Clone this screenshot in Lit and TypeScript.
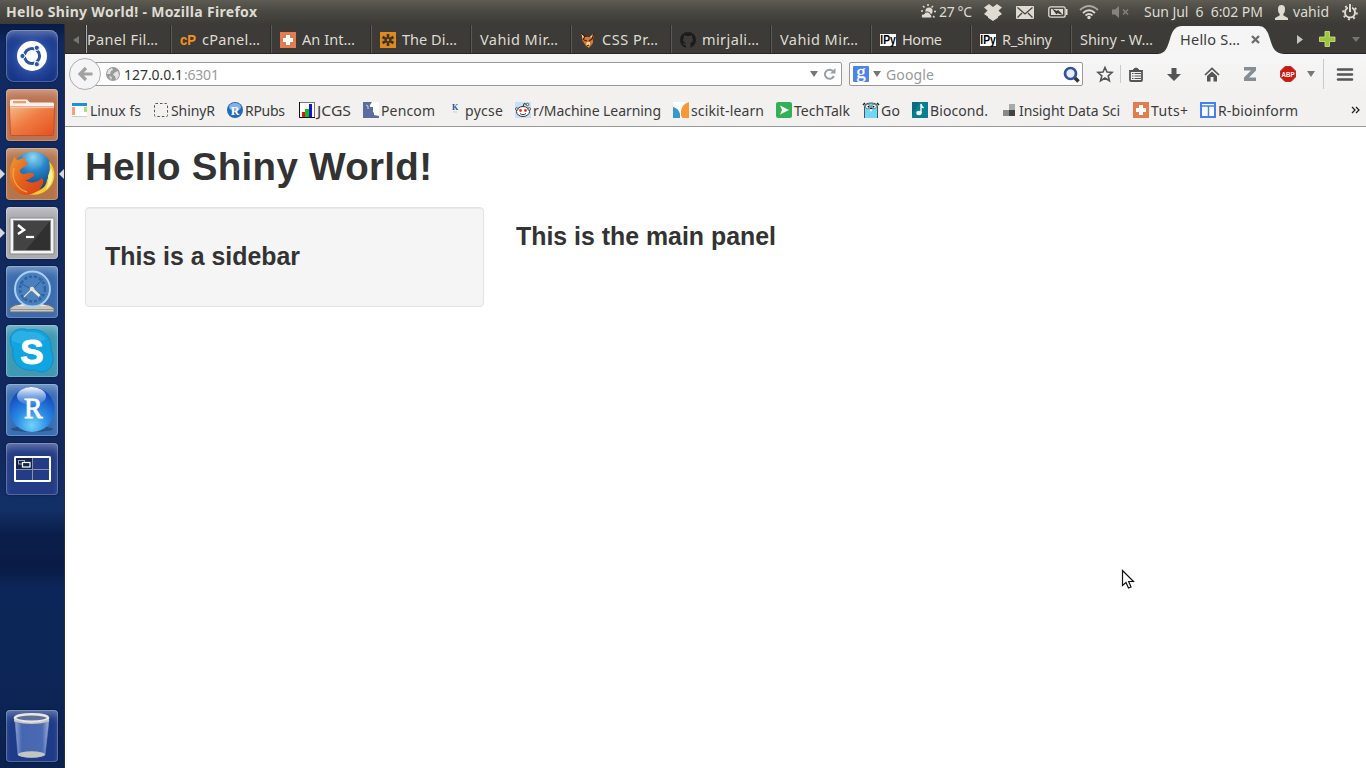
import { LitElement, html, css, svg } from "lit";
import { customElement, property } from "lit/decorators.js";

/** A single line of text that occupies exactly `w` pixels, by tracking or, with `squeeze`, by scaling. */
@customElement("fit-text")
class FitText extends LitElement {
  @property({ type: Number }) w = 0;
  @property() text = "";
  @property({ type: Boolean }) squeeze = false;
  static styles = css`
    :host { display: inline-block; white-space: pre; flex: none; }
    span { display: inline-block; transform-origin: 0 50%; }
  `;
  render() {
    return html`<span>${this.text}</span>`;
  }
  updated() {
    const s = this.shadowRoot!.querySelector("span")!;
    s.style.letterSpacing = "0px";
    s.style.transform = "";
    const natural = s.getBoundingClientRect().width;
    if (this.squeeze) s.style.transform = `scaleX(${this.w / natural})`;
    else s.style.letterSpacing = (this.w - natural) / Math.max(1, this.text.length - 1) + "px";
  }
}

const t = (text: string, w: number, squeeze = false) =>
  html`<fit-text .text=${text} .w=${w} .squeeze=${squeeze}></fit-text>`;
const ic = (w: number, h: number, body: unknown) =>
  html`<svg class="ic" width=${w} height=${h} viewBox="0 0 ${w} ${h}">${body}</svg>`;

const tuts = svg`<rect width="16" height="16" fill="#e27d50"/><path d="M6 3h4v3h3v4h-3v3H6v-3H3V6h3z" fill="#fff"/>`;
const ipy = svg`<rect y="2" width="16" height="12" fill="#fff"/><text x="0.3" y="12" class="ipy" textLength="15.500" lengthAdjust="spacingAndGlyphs">IPy</text>`;

const tabs: { icon?: unknown; label: string; w: number }[] = [
  { icon: svg`<text x="0" y="13" class="cp" textLength="16" lengthAdjust="spacingAndGlyphs">cP</text>`, label: "cPanel…", w: 58 },
  { icon: tuts, label: "An Int…", w: 53 },
  {
    icon: svg`<rect width="16" height="16" fill="#df8a1c"/><g stroke="#3c3326" stroke-width="2.6"><path d="M8 2v12M2.5 5l11 6M13.500 5l-11 6"/></g><circle cx="8" cy="8" r="1.2" fill="#df8a1c"/>`,
    label: "The Di…", w: 55,
  },
  { label: "Vahid Mir…", w: 78 },
  {
    icon: svg`<path d="M2 3l3 2h5l4-3-1 5 0 4-4 5-3-2-4-6z" fill="#d9772b"/><path d="M1 1l4 5-2 1M10 5l4-4-1 5M7 10l3 0 0 3-2 2-2-3z" fill="#f6dba8"/><path d="M1 1l4 3-2 4M14 1l-2 6M4 8l3 1M9 9l3-2M7 14l2-1" stroke="#4b1f0b" fill="none" stroke-width="1.3"/>`,
    label: "CSS Pr…", w: 56,
  },
  {
    icon: svg`<circle cx="8" cy="8" r="8" fill="#1d1c1b"/><path d="M6 16v-3c-2 .5-3-.500-3.500-2 1 .2 1.500 1 2.500 1l1-1C3.500 10.500 3 9 3.200 7L4 5.300 4 3.200l2 .8h4l2-.8v2.100l.8 1.700c.2 2-.3 3.500-2.800 4l.5 1V16z" fill="#3c3b37"/>`,
    label: "mirjali…", w: 57,
  },
  { label: "Vahid Mir…", w: 78 },
  { icon: ipy, label: "Home", w: 40 },
  { icon: ipy, label: "R_shiny", w: 50 },
  { label: "Shiny - W…", w: 73 },
];

const marks: { icon: unknown; label: string; w: number; squeeze?: boolean }[] = [
  { icon: svg`<rect y="1" width="15" height="14" fill="#fff"/><rect y="1" width="15" height="3" fill="#1e90d8"/><rect y="5" width="3" height="8" fill="#f0a27c"/><rect x="12" y="5" width="3" height="5" fill="#b6d98a"/><path d="M0 14.500h15" stroke="#ccc"/>`, label: "Linux fs", w: 51 },
  { icon: svg`<rect x="1.500" y="1.500" width="13" height="13" rx="1" fill="none" stroke="#555" stroke-dasharray="2.500 2"/>`, label: "ShinyR", w: 44 },
  { icon: svg`<circle cx="8" cy="8" r="8" fill="#2467bd"/><ellipse cx="8" cy="5" rx="6" ry="4" fill="#84b4e8"/><text x="8" y="12.500" text-anchor="middle" class="rser">R</text>`, label: "RPubs", w: 40 },
  { icon: svg`<rect x=".5" y=".5" width="15" height="15" fill="#fff" stroke="#777"/><path d="M.5 0v15.500H16" stroke="#111" fill="none"/><rect x="3" y="10" width="3" height="5" fill="#e01414"/><rect x="6" y="7" width="4" height="8" fill="#0cc314"/><rect x="10" y="2" width="3" height="13" fill="#1414d8"/>`, label: "JCGS", w: 34, squeeze: true },
  { icon: svg`<rect width="16" height="16" fill="#fff"/><path d="M0 0h9l-2 3v2h3v5l1 1v2l5 1v2H0z" fill="#5c6c9e"/><path d="M3 3l2 1v3" stroke="#cdd3e5" fill="none"/>`, label: "Pencom", w: 54 },
  { icon: svg`<text x="5" y="8" class="kk">K</text><path d="M6 10h4" stroke="#c7d0df"/>`, label: "pycse", w: 38 },
  { icon: svg`<rect width="16" height="16" fill="#c5e1f8"/><ellipse cx="8" cy="9.500" rx="6.500" ry="5" fill="#fff" stroke="#333"/><circle cx="1.800" cy="7" r="1.300" fill="#fff" stroke="#333" stroke-width=".8"/><circle cx="14.200" cy="7" r="1.300" fill="#fff" stroke="#333" stroke-width=".8"/><path d="M8 5l1-3.500 3 1M5 11.500c2 1.500 4 1.500 6 0" fill="none" stroke="#333"/><circle cx="12.500" cy="2.500" r="1.200" fill="#fff" stroke="#333" stroke-width=".8"/><circle cx="5.500" cy="8.500" r="1.400" fill="#f03410"/><circle cx="10.500" cy="8.500" r="1.400" fill="#f03410"/>`, label: "r/Machine Learning", w: 128 },
  { icon: svg`<rect width="16" height="16" fill="#fff"/><path d="M0 5c5 1 8 6 7 11H0z" fill="#3499cd"/><path d="M16 0C9 2 6 9 9 16h7z" fill="#f89939"/>`, label: "scikit-learn", w: 73 },
  { icon: svg`<rect width="16" height="16" rx="2" fill="#34b156"/><path d="M4 3.500l9 4.500-9 4.500L6 8z" fill="#fff"/>`, label: "TechTalk", w: 56 },
  { icon: svg`<path d="M2 16V4q0-3 6-3t6 3v12z" fill="#72d7f4"/><path d="M1.500 16V5q0-4 6.500-4t6.500 4v11" fill="none" stroke="#345" stroke-width=".9"/><path d="M0 3l2-2M16 3l-2-2" stroke="#222" stroke-width="1.500"/><circle cx="4.800" cy="4.500" r="2.300" fill="#fff" stroke="#222" stroke-width=".5"/><circle cx="11" cy="4.500" r="2.300" fill="#fff" stroke="#222" stroke-width=".5"/><circle cx="5.500" cy="4.700" r=".9"/><circle cx="10.500" cy="4.700" r=".9"/><path d="M7 6.500h2.300" stroke="#222" stroke-width="1.200"/><path d="M7 8.300h2" stroke="#fff" stroke-width="2"/>`, label: "Go", w: 19 },
  { icon: svg`<rect width="16" height="16" fill="#087e95"/><path d="M0 0h8L0 12z" fill="#0b6a80"/><ellipse cx="7" cy="11" rx="2.700" ry="2.200" fill="#fff"/><path d="M9 11V2q.5 2.500 2.500 4" stroke="#fff" stroke-width="1.400" fill="none"/>`, label: "Biocond.", w: 58 },
  { icon: svg`<rect x="8" y="2" width="6" height="6" fill="#a6aaa8"/><rect x="2" y="8" width="6" height="6" fill="#85898a"/><rect x="8" y="8" width="6" height="6" fill="#404442"/>`, label: "Insight Data Sci", w: 101 },
  { icon: tuts, label: "Tuts+", w: 37 },
  { icon: svg`<rect x="1" y="1" width="14" height="14" fill="#fff" stroke="#3f83f0" stroke-width="2"/><path d="M1 4h14M8.500 4v11" stroke="#3f83f0" stroke-width="1.500"/>`, label: "R-bioinform", w: 80 },
];

const ubuntu = svg`<circle cx="26" cy="26" r="15" fill="#fff"/><circle cx="26" cy="26" r="7.600" fill="none" stroke="#2c55a0" stroke-width="3"/><g stroke="#fff" stroke-width="1.500"><path d="M26 26h-11M26 26l5.500 9.500M26 26l5.500-9.500"/></g><circle cx="26" cy="26" r="5.500" fill="#fff"/><g fill="#2c55a0" stroke="#fff" stroke-width="1"><circle cx="16.500" cy="26" r="2.600"/><circle cx="30.800" cy="17.800" r="2.600"/><circle cx="30.800" cy="34.200" r="2.600"/></g>`;

const files = svg`
  <defs><linearGradient id="fo" x1="0" y1="0" x2="1" y2="1"><stop offset="0" stop-color="#f5b883"/><stop offset=".45" stop-color="#ef7b42"/><stop offset="1" stop-color="#e4501f"/></linearGradient></defs>
  <path d="M4 18v-6q0-1.500 1.500-1.500H21l3 3h22.500q1.500 0 1.500 1.500v3z" fill="#f5f2ee"/><rect x="7" y="12" width="13" height="2.300" fill="#f09a68"/>
  <path d="M3.500 18H48.500L47.500 45.500q0 1-1 1h-41q-1 0-1-1z" fill="url(#fo)" stroke="#c4481c" stroke-width=".8"/><path d="M4 18.600h44" stroke="#f8cda8"/>`;

const firefox = svg`
  <defs><radialGradient id="gl" cx=".5" cy=".15" r=".9"><stop offset="0" stop-color="#8fd8f2"/><stop offset=".4" stop-color="#2585c8"/><stop offset="1" stop-color="#12366f"/></radialGradient>
  <linearGradient id="fx" x1="0" y1="0" x2="1" y2=".9"><stop offset="0" stop-color="#f39a32"/><stop offset=".5" stop-color="#e4601d"/><stop offset="1" stop-color="#d9411a"/></linearGradient></defs>
  <circle cx="27" cy="23" r="19.500" fill="url(#gl)"/>
  <path d="M28 6l5 4-4 5 5 4 3-6" fill="#5bb4df" opacity=".3"/>
  <path d="M43 13c8 9 7 22-2 29-5 4-12 6-19 4 12-2 18-6 19-14 2-3 4-11 2-19z" fill="#f7c92d"/>
  <path d="M45 20c4 8 1 17-5 22 2-7 3-9 2-14z" fill="#fff09a"/>
  <path d="M9 8c0 3 1 3 2 4 2-1 4-1 6-1l2-3c0 4-1 5 3 7-1 4-6 4-8 7 0 3 1 4 4 4 2 0 5-2 7-1 4 0 4 3 1 4-2 1-3 3-7 3 5 4 12 3 17-2 5 6-5 17-17 17C9 46 3 36 4 24 4 16 7 13 9 8z" fill="url(#fx)"/>
  <path d="M8 20c-3 10 2 21 13 24" stroke="#f5a23e" stroke-width="1.300" fill="none"/>`;

const terminal = svg`
  <rect x="4" y="11" width="44" height="36" rx="1" fill="#f4f4f4" stroke="#88888a"/>
  <rect x="7.500" y="13.500" width="37" height="30" fill="#2f302f" stroke="#8a8a8a"/><path d="M8 14h36L20 43H8z" fill="#4a4b4a" opacity=".7"/>
  <path d="M12 18l6 5-6 4" stroke="#fff" stroke-width="2.500" fill="none"/><path d="M20 30h8" stroke="#fff" stroke-width="2.200"/>`;

const clock = svg`
  <path d="M4 46v-4l5-3h34l5 3v4z" fill="#c9c6bd" stroke="#6b6c70"/><path d="M10 40q16-7 32 0z" fill="#efece3"/><path d="M5 43.500h42" stroke="#96948f"/>
  <circle cx="26.500" cy="23" r="17.500" fill="#4a80bd" stroke="#a8d0f2" stroke-width="2"/><circle cx="26.500" cy="23" r="12.500" fill="none" stroke="#2f62a0" stroke-width="2.500" stroke-dasharray="3 2"/>
  <path d="M14 17l24 13M16 34l21-21" stroke="#2b5f9c"/><path d="M26 23l7.500 7" stroke="#f0e9d2" stroke-width="2.600"/><path d="M26 23l-8 8" stroke="#e8e1cb" stroke-width="1.300"/><circle cx="26" cy="23" r="2.300" fill="#e8e1cb"/>`;

const skype = svg`
  <path d="M14 4q4-1 8 1c15-3 24 7 23 20 5 9 1 22-10 22-3 0-4-1-6-2-15 2-24-8-22-21C1 14 6 5 14 4z" fill="#10a4e0" stroke="#0c84c1" stroke-width=".7"/>
  <path d="M6 11q6-8 15-4 12-2 19 7-16 9-34 2z" fill="#54c4f0" opacity=".4"/>
  <text x="26" y="38.500" text-anchor="middle" class="sky">S</text>`;

const rstudio = svg`
  <defs><radialGradient id="rs" cx=".5" cy=".85" r=".8"><stop offset="0" stop-color="#6fd4fb"/><stop offset=".45" stop-color="#2b8be6"/><stop offset="1" stop-color="#0f45b8"/></radialGradient>
  <linearGradient id="rh" x1="0" y1="0" x2="0" y2="1"><stop offset="0" stop-color="#fff"/><stop offset="1" stop-color="#8fc0f4" stop-opacity=".2"/></linearGradient></defs>
  <ellipse cx="26" cy="45" rx="21" ry="3" fill="#2b5287"/><circle cx="26" cy="25.500" r="22.500" fill="url(#rs)"/><ellipse cx="25.500" cy="12" rx="14.500" ry="9" fill="url(#rh)"/>
  <text x="18" y="34" class="rbig" textLength="18.500" lengthAdjust="spacingAndGlyphs">R</text>`;

const workspace = svg`
  <rect x="13" y="14" width="35" height="24" transform="translate(-4 0)" fill="none" stroke="#fff" stroke-width="2" rx=".5"/><path d="M10 15h16v11H10z" fill="#12234e"/>
  <path d="M26.500 15v22M10 26.500h33" stroke="#8f939e"/><rect x="12.500" y="17.500" width="6" height="3.500" fill="none" stroke="#a5a8b0"/><rect x="16.500" y="19.500" width="7.500" height="4.500" fill="#12234e" stroke="#fff" stroke-width="1.200"/>`;

const trash = svg`
  <defs><linearGradient id="tr" x1="0" y1="0" x2="1" y2="0"><stop offset="0" stop-color="#8ea4d8"/><stop offset=".2" stop-color="#4766b0"/><stop offset=".8" stop-color="#4c6ab2"/><stop offset="1" stop-color="#9eb0dc"/></linearGradient></defs>
  <path d="M9 10h34l-4 35q-13 5-27 0z" fill="url(#tr)" stroke="#8096c9" stroke-width=".5"/><ellipse cx="25.500" cy="44.500" rx="13.500" ry="3.300" fill="#c4c4c2"/>
  <ellipse cx="25.500" cy="8" rx="16.500" ry="3.800" fill="#5f6f9b" stroke="#e9e8e3" stroke-width="2.600"/><path d="M8 9q17 7 35 0v2.500q-17 5-35 0z" fill="#c9c7c1"/>`;

@customElement("unity-launcher")
class UnityLauncher extends LitElement {
  static styles = css`
    :host { display: flex; flex-direction: column; gap: 7px; box-sizing: border-box; width: 65px; padding: 6px 0 6px 6px; flex: none;
      border-right: 1px solid #2c2e35;
      background: linear-gradient(#081b45 0, #102a62 20px, #11295e 250px, #11295f 430px, #133066 485px, #0b1e4b 510px, #0a1b45 543px, #0d2659 565px, #0c2657 650px, #0b214e 100%); }
    .tile { position: relative; box-sizing: border-box; width: 52px; height: 52px; border-radius: 4px; background: #1e3c86; flex: none;
      box-shadow: inset 0 0 0 1px rgba(255,255,255,.22), inset 0 7px 9px -3px rgba(255,255,255,.35), 0 0 2px rgba(0,0,0,.5); }
    .tile svg { display: block; width: 52px; height: 52px; }
    .home { border-radius: 8px; background: radial-gradient(circle, #6f8dc9 0, #24469b 50%, #173687 75%); }
    .files { background: #ba7350; }
    .fox { background: #b5754a; }
    .term { background: #aaaaaf; }
    .clock { background: #3c6cae; }
    .sky { background: #3f99b3; }
    .rst { background: #3a6fb5; }
    .work { background: #233c85; }
    .bin { margin-top: auto; background: #1e3b87; }
    .run::before { content: ""; position: absolute; left: -6px; top: 21px; border: 5px solid transparent; border-left-color: #d6d9e0; border-right: 0; }
    .focus::after { content: ""; position: absolute; right: -6px; top: 21px; border: 5px solid transparent; border-right-color: #d6d9e0; border-left: 0; }
    text.sky { font: bold 35px "Liberation Sans", sans-serif; fill: #fff; stroke: #fff; stroke-width: 1; }
    .rbig { font: 29px "Liberation Serif", serif; fill: #fff; stroke: #fff; stroke-width: .8; }
  `;
  render() {
    const apps: [string, unknown][] = [
      ["home", ubuntu], ["files", files], ["fox run focus", firefox], ["term run", terminal],
      ["clock", clock], ["sky", skype], ["rst", rstudio], ["work", workspace], ["bin", trash],
    ];
    return apps.map(([c, g]) => html`<div class="tile ${c}"><svg viewBox="0 0 52 52">${g}</svg></div>`);
  }
}

@customElement("app-root")
class AppRoot extends LitElement {
  static styles = css`
    :host { display: flex; flex-direction: column; width: 1366px; height: 768px; overflow: hidden; position: relative;
      font: 14px/20px "Noto Sans", "Open Sans", sans-serif; color: #3c3c3c; background: #fff; }
    .ic { display: block; flex: none; overflow: visible; }
    .panel { flex: none; display: flex; align-items: center; height: 24px; color: #dfdbd2; background: linear-gradient(#5d5b52, #4a4943 45%, #3c3b37); padding-left: 6px; box-sizing: border-box; }
    .title { font-weight: 700; font-size: 14px; flex: 1; }
    .ind { display: grid; align-items: center; grid-template-columns: 19px 45px 32px 32px 31px 33px 32px 131px 18px 49px 24px; }
    .body { flex: 1; display: flex; min-height: 0; }
    .win { flex: 1; min-width: 0; display: flex; flex-direction: column; }
    .tabs { flex: none; display: flex; align-items: center; height: 30px; box-sizing: border-box; background: #3c3b37; border-bottom: 1px solid #2b2529; color: #dfdbd2; font-size: 14.500px; }
    .tabs fit-text { margin-bottom: 2px; }
    .scroll { width: 21px; display: flex; justify-content: center; padding-top: 2px; }
    .tab { box-sizing: border-box; width: 100px; height: 28px; padding: 2px 0 0 8px; display: flex; align-items: center; gap: 6px; border-left: 1px solid #5c5a54; box-shadow: -1px 0 #2d2c29; }
    .first { width: 85px; padding-left: 0; border-color: #b0ada6; }
    .active { position: relative; width: 100px; height: 30px; padding: 2px 0 0 9px; display: flex; align-items: center; gap: 11px; box-sizing: border-box; color: #3c3c3c; }
    .shape { position: absolute; left: -13px; top: 1px; }
    .active fit-text, .active .x { position: relative; }
    .tail { flex: 1; display: grid; grid-template-columns: 23px 33px 1fr; align-items: center; padding: 1px 0 0 25px; }
    .nav { flex: none; display: flex; align-items: center; height: 40px; background: linear-gradient(#f7f6f6, #f2f1f0); padding-left: 4px; }
    .back { position: relative; z-index: 1; flex: none; width: 30px; height: 30px; border: 1px solid #a9aeb5; border-radius: 50%; background: #f6f5f5; display: flex; align-items: center; justify-content: center; }
    .field { flex: none; box-sizing: border-box; height: 24px; border: 1px solid #989898; background: #fff; border-radius: 2px; display: flex; align-items: center; }
    .field fit-text { margin-top: 2px; }
    .url { width: 757px; margin-left: -16px; padding: 0 4px 0 20px; color: #999; }
    .url b { font-weight: 400; color: #333; padding-left: 4px; display: flex; }
    .url b + fit-text { margin-left: 1px; }
    .url .grow { flex: 1; }
    .url .reload { margin-left: 6px; }
    .search { width: 234px; margin-left: 7px; padding: 0 2px 0 3px; gap: 4px; color: #999; }
    .search .grow { flex: 1; padding-left: 1px; display: flex; }
    .tools { flex: none; display: grid; align-items: center; justify-items: center; grid-template-columns: 30px 1px 30px 45px 31px 45px 31px 16px 4px 1px 42px; margin-left: 7px; }
    .sep { width: 1px; height: 18px; background: #c3cbd3; }
    .sep.tall { height: 30px; }
    .marks { flex: none; box-sizing: border-box; height: 33px; padding: 0 0 1px 7px; display: grid; align-items: center; background: #f2f1f0; border-bottom: 1px solid #999;
      grid-template-columns: 81px 74px 72px 64px 84px 68px 158px 103px 87px 49px 89px 132px 67px 151px 1fr; }
    .mark { display: flex; align-items: center; gap: 2px; }
    .mark fit-text { margin-top: 2px; }
    .page { flex: 1; position: relative; background: #fff; padding: 20px 20px 0; color: #333; font-family: "Liberation Sans", sans-serif; font-weight: 700; }
    h1 { margin: 0 0 20px; font-size: 38.500px; line-height: 40px; }
    h3 { margin: 9px 0; font-size: 26px; line-height: 40px; }
    .row { display: flex; align-items: flex-start; gap: 32px; }
    .well { box-sizing: border-box; width: 399px; height: 100px; padding: 19px; background: #f5f5f5; border: 1px solid #e3e3e3; border-radius: 4px; box-shadow: inset 0 1px 1px rgba(0,0,0,.05); }
    .cursor { position: absolute; left: 1121px; top: 569px; }
    .ipy { font: bold 12px "Liberation Sans", sans-serif; fill: #000; }
    .cp { font: bold 15px "Liberation Sans", sans-serif; fill: #f7921e; }
    .rser { font: bold 12px "Liberation Serif", serif; fill: #fff; }
    .kk { font: bold 8px "Liberation Serif", serif; fill: #24529e; }
    .goo { font: 19px "Liberation Serif", serif; fill: #fff; stroke: #fff; stroke-width: .3; }
    .abp { font: bold 7px "Liberation Sans", sans-serif; fill: #fff; }
  `;

  panel() {
    const c = "#dfdbd2";
    return html`<div class="panel">
      <div class="title">${t("Hello Shiny World! - Mozilla Firefox", 251)}</div>
      <div class="ind">
        ${ic(17, 18, svg`<g stroke=${c} stroke-width="1.500"><path d="M8 1v2M3 3l1.500 1.500M13 3l-1.500 1.500M14 8.500h2M1 8h2M13 13l1.500 1.500"/></g><circle cx="9" cy="8" r="3.600" fill=${c}/><path d="M2 15q-2-4 2-4 1-3 4-2 2 0 2.500 2.500 2.500 1 1 3.500z" fill=${c} stroke="#4a4943"/>`)}
        ${t("27 °C", 33)}
        ${ic(18, 17, svg`<path d="M5 0l4 3 4-3 5 3.500-3.500 3L18 10l-4 2.700v1L9 17l-5-3.300v-1L0 10l3.500-3.500L0 3.500z" fill=${c}/>`)}
        ${ic(18, 13, svg`<rect width="18" height="13" rx="1" fill=${c}/><path d="M1.500 1.500L9 8l7.500-6.500M1.500 11.500L6 7M16.500 11.500L12 7" stroke="#474640" stroke-width="1.300" fill="none"/>`)}
        ${ic(20, 12, svg`<rect x=".8" y=".8" width="16.400" height="10.400" rx="2" fill="none" stroke=${c} stroke-width="1.300"/><rect x="18" y="3" width="1.500" height="6" fill=${c}/><rect x="3" y="3" width="12" height="6" fill=${c}/><path d="M4 2.500l5 2.500 1-1.300L15 9 9.500 7.300 8.500 8.500z" fill="#3c3b37"/>`)}
        ${ic(20, 14, svg`<g fill="none" stroke-width="1.700"><path d="M1 5q9-8 18 0" stroke="#aaa79f"/><path d="M4 8q6-5.500 12 0" stroke=${c}/><path d="M6.500 10.500q3.500-3 7 0" stroke=${c}/></g><circle cx="10" cy="12.500" r="1.700" fill=${c}/>`)}
        ${ic(18, 14, svg`<path d="M0 4.500h3L7 1v12L3 9.500H0z" fill="#85837c"/><path d="M11 4.500l5 5M16 4.500l-5 5" stroke="#85837c" stroke-width="1.500"/>`)}
        ${t("Sun Jul  6  6:02 PM", 119)}
        ${ic(13, 15, svg`<path d="M6.500 0Q10 0 10 4T8.200 9l.3 1.500L13 13v2H0v-2l4.500-2.500.3-1.500Q3 8 3 4t3.500-4z" fill=${c}/>`)}
        ${t("vahid", 36)}
        ${ic(16, 16, svg`<circle cx="8" cy="8.500" r="5" fill="none" stroke=${c} stroke-width="2"/><circle cx="8" cy="8.500" r="6.800" fill="none" stroke=${c} stroke-width="2" stroke-dasharray="2 3.340"/><rect x="6" y="0" width="4" height="8" fill="#4a4943"/><path d="M8 0v8" stroke=${c} stroke-width="2"/>`)}
      </div>
    </div>`;
  }

  tabStrip() {
    return html`<div class="tabs">
      <div class="scroll">${ic(6, 8, svg`<path d="M6 0v8L0 4z" fill="#77756f"/>`)}</div>
      <div class="tab first">${t("Panel Fil…", 71)}</div>
      ${tabs.map((x) => html`<div class="tab">${x.icon ? ic(16, 16, x.icon) : ""}${t(x.label, x.w)}</div>`)}
      <div class="active">
        <svg class="shape" width="126" height="29" viewBox="0 0 126 29"><path d="M0 29C8 28 9 23 12 14Q15 1 24 1H101Q109 1 112 14C115 24 117 28 126 29z" fill="#f6f5f5"/></svg>
        ${t("Hello S…", 60)}
        <svg class="x" width="9" height="9" viewBox="0 0 9 9"><path d="M1 1l7 7M8 1l-7 7" stroke="#6c6c6c" stroke-width="2.300"/></svg>
      </div>
      <div class="tail">
        ${ic(7, 9, svg`<path d="M1 0v9l6-4.500z" fill="#c8c5be"/>`)}
        ${ic(16, 16, svg`<path d="M6 .5h4.500V6H16v4.500h-5.500V15.500H6v-5H.5V6H6z" fill="#9cc43d" stroke="#d2e88e" stroke-width=".8"/>`)}
        ${ic(8, 5, svg`<path d="M0 0h8L4 5z" fill="#77756f"/>`)}
      </div>
    </div>`;
  }

  navBar() {
    const g = "#555";
    const caret = ic(8, 6, svg`<path d="M0 0h8L4 6z" fill="#777"/>`);
    return html`<div class="nav">
      <div class="back">${ic(15, 14, svg`<path d="M8 1L2 7l6 6M2 7h12.500" stroke="#a2a2a2" stroke-width="3.200" fill="none"/>`)}</div>
      <div class="field url">
        ${ic(14, 14, svg`<circle cx="7" cy="7" r="7" fill="#9b9b9b"/><path d="M2 3l4-2 1 2-2 1-1 3-3 0M8 6l4-2 1 5-3 4-1-4-2-1M3 9l3 1-1 3" fill="#e4e4e4"/>`)}
        <b>${t("127.0.0.1", 59)}</b>${t(":6301", 35)}
        <span class="grow"></span>${caret}
        <svg class="ic reload" width="13" height="14" viewBox="0 0 13 14"><path d="M9 4.200A4.600 4.600 0 1 0 9.800 9" fill="none" stroke="#999fa6" stroke-width="2"/><path d="M11.500 1v5.500H6z" fill="#999fa6"/></svg>
      </div>
      <div class="field search">
        ${ic(16, 16, svg`<rect width="16" height="16" rx="1" fill="#4d83f1"/><text x="8" y="11.500" text-anchor="middle" class="goo">g</text>`)}
        ${caret}<span class="grow">${t("Google", 48)}</span>
        ${ic(17, 17, svg`<path d="M11 11l4.500 4.500" stroke="#333" stroke-width="3.500"/><circle cx="7.500" cy="7.500" r="5.500" fill="#e3ecf8" stroke="#32509b" stroke-width="2.700"/>`)}
      </div>
      <div class="tools">
        ${ic(16, 16, svg`<path d="M8 1.500l2 4.600 5 .4-3.800 3.300 1.200 4.900L8 12l-4.400 2.700 1.200-4.900L1 6.500l5-.4z" fill="none" stroke=${g} stroke-width="1.600"/>`)}
        <span class="sep"></span>
        ${ic(14, 15, svg`<rect x="1" y="4" width="12" height="10" rx="1" fill="#f4f3f3" stroke=${g} stroke-width="1.800"/><path d="M4 3q3-4 6 0z" fill=${g} stroke=${g}/><path d="M0 3.800h14" stroke=${g} stroke-width="1.500"/><path d="M3 6.500h1.500M5.500 6.500H12M3 9h1.500M5.500 9H12M3 11.500h1.500M5.500 11.500H12" stroke=${g} stroke-width="1.200"/>`)}
        ${ic(14, 15, svg`<path d="M4.500 1h5v6H14l-7 7-7-7h4.500z" fill=${g}/>`)}
        ${ic(16, 15, svg`<path d="M1 8l7-6.500L15 8" fill="none" stroke=${g} stroke-width="1.700"/><path d="M3 9l5-4.500L13 9V14.500H9.500V10h-3v4.500H3z" fill=${g}/>`)}
        ${ic(12, 14, svg`<path d="M0 0h12v3.500L5 10.500h7V14H0v-3.500L7 3.500H0z" fill="#858e95"/>`)}
        ${ic(16, 16, svg`<path d="M5 .5h6L15.500 5v6L11 15.500H5L.5 11V5z" fill="#d3170d" stroke="#9f3b35"/><text x="1.500" y="10.500" class="abp" textLength="13" lengthAdjust="spacingAndGlyphs">ABP</text>`)}
        ${caret}<span></span>
        <span class="sep tall"></span>
        ${ic(16, 13, svg`<path d="M1 1.500h14M1 6.500h14M1 11.500h14" stroke=${g} stroke-width="2.600" stroke-linecap="round"/>`)}
      </div>
    </div>`;
  }

  render() {
    return html`${this.panel()}
      <div class="body">
        <unity-launcher></unity-launcher>
        <div class="win">
          ${this.tabStrip()} ${this.navBar()}
          <div class="marks">
            ${marks.map((m) => html`<div class="mark">${ic(16, 16, m.icon)}${t(m.label, m.w, m.squeeze)}</div>`)}
            ${ic(9, 8, svg`<path d="M1 1l3 3-3 3M5 1l3 3-3 3" fill="none" stroke="#222" stroke-width="1.300"/>`)}
          </div>
          <div class="page">
            <h1>${t("Hello Shiny World!", 347)}</h1>
            <div class="row">
              <div class="well"><h3>${t("This is a sidebar", 195, true)}</h3></div>
              <h3>${t("This is the main panel", 260, true)}</h3>
            </div>
          </div>
        </div>
      </div>
      <svg class="cursor" width="14" height="21" viewBox="0 0 14 21"><path d="M1.500 1.500v15l3.500-3 2.500 5.500 2.500-1-2.300-5.500h4.800z" fill="#fff" stroke="#111" stroke-width="1.200"/></svg>`;
  }
}
